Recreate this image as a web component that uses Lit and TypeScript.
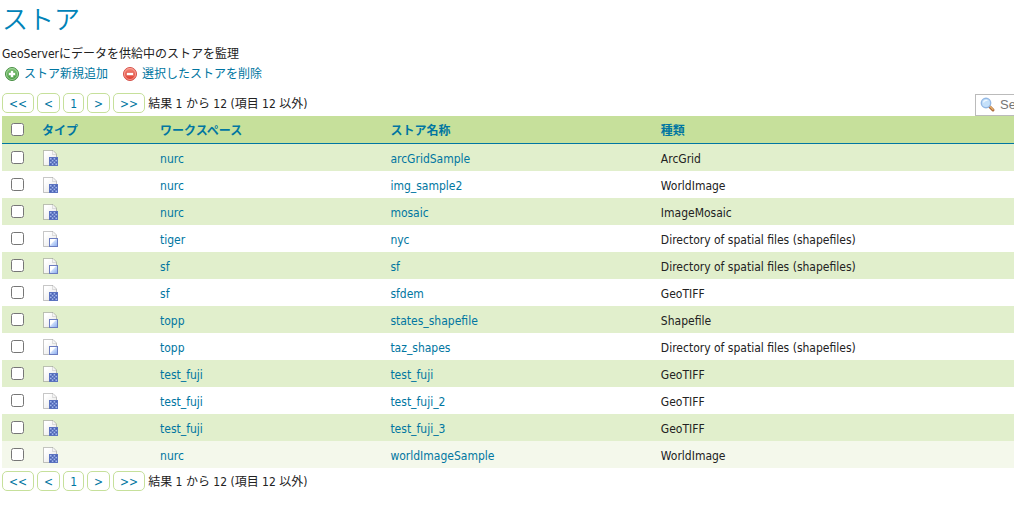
import { LitElement, html, css, svg } from "lit";
import { customElement, property } from "lit/decorators.js";

type Kind = "raster" | "vector";

interface Store {
  kind: Kind;
  workspace: string;
  name: string;
  format: string;
}

const SHAPE_DIR = "Directory of spatial files (shapefiles)";

const STORES: Store[] = [
  { kind: "raster", workspace: "nurc", name: "arcGridSample", format: "ArcGrid" },
  { kind: "raster", workspace: "nurc", name: "img_sample2", format: "WorldImage" },
  { kind: "raster", workspace: "nurc", name: "mosaic", format: "ImageMosaic" },
  { kind: "vector", workspace: "tiger", name: "nyc", format: SHAPE_DIR },
  { kind: "vector", workspace: "sf", name: "sf", format: SHAPE_DIR },
  { kind: "raster", workspace: "sf", name: "sfdem", format: "GeoTIFF" },
  { kind: "vector", workspace: "topp", name: "states_shapefile", format: "Shapefile" },
  { kind: "vector", workspace: "topp", name: "taz_shapes", format: SHAPE_DIR },
  { kind: "raster", workspace: "test_fuji", name: "test_fuji", format: "GeoTIFF" },
  { kind: "raster", workspace: "test_fuji", name: "test_fuji_2", format: "GeoTIFF" },
  { kind: "raster", workspace: "test_fuji", name: "test_fuji_3", format: "GeoTIFF" },
  { kind: "raster", workspace: "nurc", name: "worldImageSample", format: "WorldImage" },
];

@customElement("store-icon")
export class StoreIcon extends LitElement {
  @property() kind: Kind = "raster";

  static styles = css`
    :host { display: block; width: 16px; height: 16px; }
    svg { display: block; }
  `;

  render() {
    const squares = [];
    for (let y = 0; y < 4; y++) {
      for (let x = 0; x < 4; x++) {
        if ((x + y) % 2 === 0) {
          squares.push(svg`<rect x=${7 + x * 1.8} y=${8 + y * 1.8} width="1.600" height="1.600" fill="#a3b8ec"/>`);
        }
      }
    }
    return html`<svg width="16" height="16" viewBox="0 0 16 16" role="img" aria-label=${this.kind}>
      <defs>
        <linearGradient id="page" x1="0" y1="0" x2="1" y2="1">
          <stop offset="0.2" stop-color="#fff"/><stop offset="1" stop-color="#e4e4e4"/>
        </linearGradient>
        <linearGradient id="fill" x1="0" y1="0" x2="1" y2="1">
          <stop offset="0.4" stop-color="#fff"/><stop offset="0.5" stop-color="#c8dafa"/><stop offset="1" stop-color="#84a8ec"/>
        </linearGradient>
      </defs>
      <path d="M.5 .5H10L13.500 4V15.500H.5Z" fill="url(#page)" stroke="#000" stroke-opacity=".22"/>
      <path d="M9.500 1V4.500H13" fill="#f4f4f4" stroke="#000" stroke-opacity=".1"/>
      ${this.kind === "raster"
        ? svg`<rect x="6.500" y="7.500" width="8" height="8" fill="#4a62b4" stroke="#5b73c0"/>${squares}`
        : svg`<rect x="6.500" y="7.500" width="8" height="8" fill="url(#fill)" stroke="#6b7cc0"/>`}
    </svg>`;
  }
}

@customElement("page-navigator")
export class PageNavigator extends LitElement {
  static styles = css`
    :host { display: flex; align-items: center; gap: 3px; }
    button {
      box-sizing: border-box;
      height: 20px;
      padding: 1px 6px 0;
      border: 1px solid #c6e09b;
      border-radius: 5px;
      background: #fff;
      color: #0076a1;
      font: inherit;
      line-height: 18px;
    }
    span { padding-top: 2px; }
  `;

  render() {
    return html`
      ${["<<", "<", "1", ">", ">>"].map((label) => html`<button type="button">${label}</button>`)}
      <span>結果 1 から 12 (項目 12 以外)</span>
    `;
  }
}

@customElement("app-root")
export class AppRoot extends LitElement {
  static styles = css`
    :host {
      display: block;
      overflow: hidden;
      padding-left: 2px;
      color: #222;
      font: 12px/18px "DejaVu Sans Condensed", "Noto Sans CJK JP", sans-serif;
    }
    a { color: #0076a1; text-decoration: none; }
    h1 {
      margin: 0;
      color: #0083b8;
      font-family: "Noto Sans CJK JP", sans-serif;
      font-size: 26px;
      font-weight: 350;
      line-height: 36px;
    }
    p { margin: 8px 0 0; line-height: 20px; }
    .actions { display: flex; gap: 14px; margin: 0; padding: 0 2px; list-style: none; }
    .actions a { display: flex; align-items: center; gap: 4px; line-height: 20px; }
    .content { width: calc(100% + 134px); }
    .toolbar { display: flex; align-items: flex-start; justify-content: space-between; margin-top: 9px; }
    .search {
      display: flex;
      align-items: center;
      gap: 4px;
      box-sizing: border-box;
      width: 173px;
      height: 22px;
      margin-top: 1px;
      padding-left: 4px;
      border: 1px solid #bbb;
      background: #fff;
    }
    .search input {
      min-width: 0;
      flex: 1;
      padding: 0;
      border: 0;
      font: 13px/18px "Liberation Sans", Arial, sans-serif;
    }
    table { width: 100%; border-collapse: separate; border-spacing: 0; table-layout: fixed; }
    .pick { width: 36px; }
    .type { width: 10.3%; }
    .workspace { width: 20.1%; }
    .name { width: 23.6%; }
    th, td { box-sizing: border-box; height: 27px; padding: 2px 4px 0; text-align: left; vertical-align: middle; }
    th { height: 28px; border-bottom: 1px solid #0076a1; background: #c6e09b; font-weight: 700; }
    th:first-child, td:first-child { padding: 0 0 0 9px; }
    td.icon { padding: 0 5px; }
    tbody tr:nth-child(odd) { background: #e1efcc; }
    tbody tr:last-child { background: #f4f8eb; }
    td input, th input { display: block; width: 13px; height: 13px; margin: 0; }
    .bottom { margin-top: 3px; }
  `;

  render() {
    return html`
      <h1>ストア</h1>
      <p>GeoServerにデータを供給中のストアを監理</p>
      <ul class="actions">
        <li><a href="#add">
          <svg width="16" height="16" viewBox="0 0 16 16" aria-hidden="true">
            <defs><linearGradient id="g" x1="0" y1="0" x2="0" y2="1"><stop offset="0" stop-color="#83c878"/><stop offset="1" stop-color="#3f9638"/></linearGradient></defs>
            <circle cx="8" cy="8" r="6.500" fill="url(#g)" stroke="#498f45"/>
            <circle cx="8" cy="8" r="5.500" fill="none" stroke="#b8dfb2" stroke-opacity=".7"/>
            <path d="M6.500 4.500h3v2h2v3h-2v2h-3v-2h-2v-3h2z" fill="#fff" stroke="#5ea756" stroke-width=".6"/>
          </svg>ストア新規追加</a></li>
        <li><a href="#remove">
          <svg width="16" height="16" viewBox="0 0 16 16" aria-hidden="true">
            <defs><linearGradient id="r" x1="0" y1="0" x2="0" y2="1"><stop offset="0" stop-color="#f58a7c"/><stop offset="1" stop-color="#dc3528"/></linearGradient></defs>
            <circle cx="8" cy="8" r="6.500" fill="url(#r)" stroke="#d4514a"/>
            <circle cx="8" cy="8" r="5.500" fill="none" stroke="#ffb9af" stroke-opacity=".7"/>
            <rect x="4.500" y="6.500" width="7" height="3" fill="#fff" stroke="#e35b4e" stroke-width=".6"/>
          </svg>選択したストアを削除</a></li>
      </ul>
      <div class="content">
        <div class="toolbar">
          <page-navigator></page-navigator>
          <label class="search">
            <svg width="16" height="16" viewBox="0 0 16 16" aria-hidden="true">
              <path d="M9.500 9.500 13 13" stroke="#a9683a" stroke-width="3" stroke-linecap="round"/>
              <path d="M10 9.500 13 12.500" stroke="#e8b16c" stroke-width="1.200" stroke-linecap="round"/>
              <circle cx="6" cy="6" r="4.700" fill="#c4e0fa" stroke="#94b8e4" stroke-width="1.400"/>
              <path d="M3.500 5.500a3 3 0 0 1 4-2" fill="none" stroke="#f0f8ff" stroke-width="1.200"/>
            </svg>
            <input type="text" placeholder="Search" aria-label="Search">
          </label>
        </div>
        <table>
          <colgroup><col class="pick"><col class="type"><col class="workspace"><col class="name"><col></colgroup>
          <thead>
            <tr>
              <th><input type="checkbox" aria-label="すべて"></th>
              ${["タイプ", "ワークスペース", "ストア名称", "種類"].map((t) => html`<th><a href="#sort">${t}</a></th>`)}
            </tr>
          </thead>
          <tbody>
            ${STORES.map((s) => html`<tr>
              <td><input type="checkbox" aria-label=${s.name}></td>
              <td class="icon"><store-icon kind=${s.kind}></store-icon></td>
              <td><a href="#workspace">${s.workspace}</a></td>
              <td><a href="#store">${s.name}</a></td>
              <td>${s.format}</td>
            </tr>`)}
          </tbody>
        </table>
        <page-navigator class="bottom"></page-navigator>
      </div>
    `;
  }
}
